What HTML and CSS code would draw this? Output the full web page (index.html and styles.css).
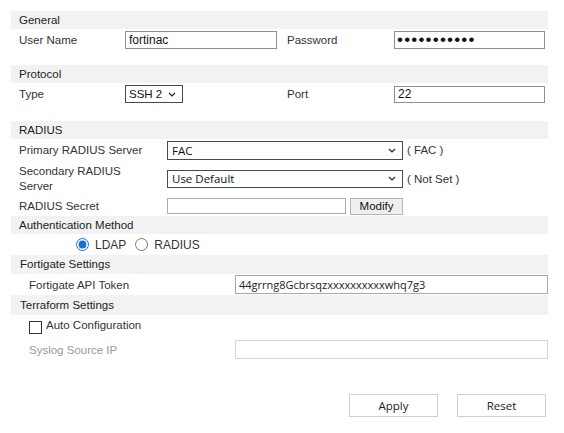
FILE: index.html
```html
<!DOCTYPE html>
<html lang="en">
<head>
<meta charset="UTF-8">
<title>Settings</title>
<link rel="stylesheet" href="styles.css">
</head>
<body>

<div class="settings">
  <!-- General -->
  <div class="section-head">General</div>
  <div class="row pair">
    <label class="lbl">User Name</label>
    <input class="field user" type="text" value="fortinac">
    <label class="lbl">Password</label>
    <input class="field pass" type="password" value="xxxxxxxxxxx">
  </div>

  <!-- Protocol -->
  <div class="section-head spaced">Protocol</div>
  <div class="row pair">
    <label class="lbl">Type</label>
    <div><select class="dropdown type-select"><option>SSH 2</option></select></div>
    <label class="lbl">Port</label>
    <input class="field port" type="text" value="22">
  </div>

  <!-- RADIUS -->
  <div class="section-head spaced-lg">RADIUS</div>
  <div class="row radius primary">
    <label class="lbl">Primary RADIUS Server</label>
    <div class="inline">
      <select class="dropdown server-select"><option>FAC</option></select>
      <span class="note">( FAC )</span>
    </div>
  </div>
  <div class="row radius secondary">
    <label class="lbl">Secondary RADIUS Server</label>
    <div class="inline">
      <select class="dropdown server-select"><option>Use Default</option></select>
      <span class="note">( Not Set )</span>
    </div>
  </div>
  <div class="row radius secret">
    <label class="lbl">RADIUS Secret</label>
    <div class="inline">
      <input class="field secret-field" type="text" value="">
      <button class="modify-btn" type="button">Modify</button>
    </div>
  </div>

  <!-- Authentication -->
  <div class="section-head">Authentication Method</div>
  <div class="row radios">
    <input type="radio" name="auth" id="authLdap" checked>
    <label for="authLdap">LDAP</label>
    <input type="radio" name="auth" id="authRadius">
    <label for="authRadius">RADIUS</label>
  </div>

  <!-- Fortigate -->
  <div class="section-head sub">Fortigate Settings</div>
  <div class="row wide token-row">
    <label class="lbl">Fortigate API Token</label>
    <input class="field token" type="text" value="44grrng8Gcbrsqzxxxxxxxxxxwhq7g3">
  </div>

  <!-- Terraform -->
  <div class="section-head sub tall">Terraform Settings</div>
  <div class="row check-row">
    <input type="checkbox" id="autoConfig">
    <label for="autoConfig">Auto Configuration</label>
  </div>
  <div class="row wide syslog-row">
    <label class="lbl disabled">Syslog Source IP</label>
    <input class="field syslog" type="text" value="" disabled>
  </div>

  <div class="actions">
    <button class="action-btn" type="button">Apply</button>
    <button class="action-btn" type="button">Reset</button>
  </div>
</div>

</body>
</html>
```

FILE: styles.css
```css
/* General Styling */
body {
  margin: 0;
  background-color: #fff;
  color: #333;
  font-family: "Liberation Sans", Arial, sans-serif;
  font-size: 11.5px;
}

.settings {
  width: 537px;
  margin: 11px 0 0 11px;
}

/* Grey section bands */
.section-head {
  height: 18px;
  line-height: 18px;
  padding-left: 8px;
  background-color: #f2f2f2;
  color: #222;
}

.section-head.spaced {
  margin-top: 14px;
}

.section-head.spaced-lg {
  margin-top: 16px;
}

.section-head.sub {
  height: 19px;
  line-height: 19px;
  padding-left: 9px;
}

.section-head.sub.tall {
  height: 20px;
  line-height: 20px;
}

/* Rows */
.row {
  display: flex;
  align-items: center;
}

.lbl {
  color: #333;
}

.lbl.disabled {
  color: #999;
}

.pair {
  display: grid;
  grid-template-columns: 106px 162px 107px 151px;
  align-items: center;
  height: 22px;
  padding-left: 8px;
}

.radius {
  display: grid;
  grid-template-columns: 148px auto;
  align-items: center;
  padding-left: 8px;
}

.radius .lbl {
  width: 126px;
  line-height: 15px;
}

.primary { height: 22px; }
.secondary { height: 35px; }
.secret { height: 20px; }

.inline {
  display: flex;
  align-items: center;
}

.wide {
  display: grid;
  grid-template-columns: 206px 313px;
  align-items: center;
  padding-left: 18px;
}

.token-row { height: 21px; }
.syslog-row { height: 23px; }

/* Inputs */
.field {
  box-sizing: border-box;
  height: 18px;
  margin: 0;
  padding: 0 3px;
  border: 1px solid #8f8f8f;
  border-radius: 0;
  background: #fff;
  color: #111;
  font-family: "Liberation Sans", Arial, sans-serif;
  font-size: 12px;
  outline: none;
}

.user { width: 152px; }
.pass { width: 151px; font-size: 17px; letter-spacing: 1.2px; padding-left: 2px; }
.port { width: 151px; height: 17px; }

.secret-field {
  width: 179px;
  height: 16px;
  border-color: #ababab;
}

.token {
  width: 313px;
  height: 19px;
  border-color: #a9a9a9;
  font-family: "Open Sans", "Noto Sans", sans-serif;
  font-size: 11px;
  color: #222;
}

.syslog {
  width: 313px;
  height: 19px;
  border-color: #d6d6d6;
  background: #fff;
}

/* Dropdowns */
.dropdown {
  -webkit-appearance: none;
  appearance: none;
  box-sizing: border-box;
  margin: 0;
  border: 1px solid #4a4a4a;
  border-radius: 0;
  background: #fff url("data:image/svg+xml,%3Csvg xmlns='http://www.w3.org/2000/svg' width='8' height='5' viewBox='0 0 8 5'%3E%3Cpath d='M1 1l3 3 3-3' fill='none' stroke='%23222' stroke-width='1.2'/%3E%3C/svg%3E") no-repeat right 6px center;
  color: #111;
  outline: none;
}

.type-select {
  width: 58px;
  height: 18px;
  padding: 0 0 0 3px;
  font-family: "Liberation Sans", Arial, sans-serif;
  font-size: 11.5px;
}

.server-select {
  width: 236px;
  height: 19px;
  padding: 0 0 0 4px;
  font-family: "Open Sans", "Noto Sans", sans-serif;
  font-size: 11.5px;
}

.secondary .server-select {
  height: 18px;
}

.note {
  margin-left: 4px;
  color: #333;
}

.modify-btn {
  box-sizing: border-box;
  width: 53px;
  height: 17px;
  margin: 0 0 0 4px;
  padding: 0;
  border: 1px solid #b5b5b5;
  background-color: #efefef;
  color: #111;
  font-family: "Liberation Sans", Arial, sans-serif;
  font-size: 11.5px;
}

/* Radio buttons */
.radios {
  height: 21px;
  padding-left: 65px;
}

.radios input {
  width: 13px;
  height: 13px;
  margin: 0 6px 0 0;
  accent-color: #1a6fd6;
}

.radios label {
  margin-right: 9px;
  font-size: 12px;
  color: #333;
}

/* Checkbox */
.check-row {
  height: 23px;
  padding-left: 18px;
}

.check-row input {
  -webkit-appearance: none;
  appearance: none;
  box-sizing: border-box;
  width: 13px;
  height: 13px;
  margin: 0 4px 0 0;
  border: 1px solid #333;
  background: #fff;
  position: relative;
  top: 1px;
}

.check-row label {
  position: relative;
  top: -2px;
}

/* Bottom buttons */
.actions {
  display: flex;
  justify-content: flex-end;
  gap: 19px;
  margin: 33px 2px 0 0;
}

.action-btn {
  box-sizing: border-box;
  width: 89px;
  height: 23px;
  margin: 0;
  border: 1px solid #cfcfcf;
  background-color: #fff;
  color: #222;
  font-family: "Open Sans", "Noto Sans", sans-serif;
  font-size: 11.5px;
}
```
